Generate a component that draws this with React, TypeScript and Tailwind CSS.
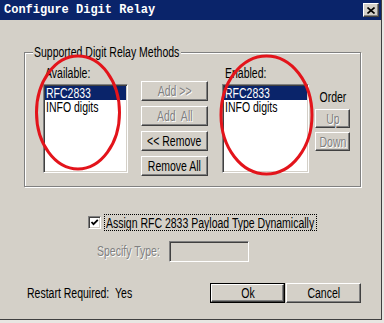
import React from 'react';

const FONT = "font-['Liberation_Sans',Arial,sans-serif]";

const raised =
  'border border-t-white border-l-white border-r-[#404040] border-b-[#404040] shadow-[inset_-1px_-1px_0_#808080] bg-[#d4d0c8]';
const sunken =
  'border border-t-[#808080] border-l-[#808080] border-r-white border-b-white shadow-[inset_1px_1px_0_#404040,inset_-1px_-1px_0_#d4d0c8]';
const disabledText = 'text-[#808080] [text-shadow:1px_1px_0_#fff]';

// the dialog font is a tall narrow sans; squeeze Liberation Sans to match
function T({ children, center }: { children: React.ReactNode; center?: boolean }) {
  return (
    <span
      className={`inline-block whitespace-pre scale-x-[0.75] ${center ? 'origin-center' : 'origin-left'}`}
    >
      {children}
    </span>
  );
}

function Button({
  label,
  disabled,
  className = '',
}: {
  label: string;
  disabled?: boolean;
  className?: string;
}) {
  return (
    <div
      className={`${raised} flex items-center justify-center leading-none overflow-visible ${
        disabled ? disabledText : 'text-black'
      } ${className}`}
    >
      <T center>{label}</T>
    </div>
  );
}

function ListBox({ items, className = '' }: { items: string[]; className?: string }) {
  return (
    <div className={`${sunken} bg-white p-[1px] ${className}`}>
      {items.map((it, i) => (
        <div
          key={it}
          className={`h-[14px] leading-[14px] pl-[1px] ${
            i === 0 ? 'bg-[#0a246a] text-white' : 'text-black'
          }`}
        >
          <T>{it}</T>
        </div>
      ))}
    </div>
  );
}

export default function App() {
  return (
    <div className={`w-[384px] h-[323px] bg-[#e8e6e2] relative overflow-hidden ${FONT} text-[14px]`}>
      <div className="w-[382px] h-[320px] bg-[#d4d0c8] border-r border-b border-r-[#404040] border-b-[#404040] flex flex-col">
        {/* Title bar */}
        <div className="h-[20px] bg-[#0a246a] flex items-center justify-between pl-[4px] pr-[2px] shrink-0">
          <span className="font-['Liberation_Mono',monospace] font-bold text-[12px] text-white leading-none">
            Configure Digit Relay
          </span>
          <div className={`${raised} w-[16px] h-[14px] flex items-center justify-center`}>
            <svg width="8" height="7" viewBox="0 0 8 7">
              <path d="M0.5 0.5 L7.5 6.5 M7.5 0.5 L0.5 6.5" stroke="#000" strokeWidth="1.6" />
            </svg>
          </div>
        </div>

        {/* Group box */}
        <div className="relative mt-[32px] ml-[24px] w-[337px] h-[135px] shrink-0 border border-[#808080] shadow-[inset_1px_1px_0_#fff,1px_1px_0_#fff] flex items-start">
          <span className="absolute left-[8px] -top-[8px] w-[148px] pl-[1px] bg-[#d4d0c8] leading-[14px] text-black">
            <T>Supported Digit Relay Methods</T>
          </span>

          <div className="ml-[18px] mt-[13px] flex flex-col">
            <div className="h-[14px] leading-[14px] pl-[2px] text-black">
              <T>Available:</T>
            </div>
            <ListBox items={['RFC2833', 'INFO digits']} className="mt-[4px] w-[85px] h-[89px]" />
          </div>

          <div className="ml-[13px] mt-[28px] flex flex-col gap-[5px]">
            <Button label="Add >>" disabled className="w-[67px] h-[20px]" />
            <Button label="Add  All" disabled className="w-[67px] h-[20px]" />
            <Button label="<< Remove" className="w-[67px] h-[20px]" />
            <Button label="Remove All" className="w-[67px] h-[20px]" />
          </div>

          <div className="ml-[14px] mt-[13px] flex flex-col">
            <div className="h-[14px] leading-[14px] pl-[3px] text-black">
              <T>Enabled:</T>
            </div>
            <ListBox items={['RFC2833', 'INFO digits']} className="mt-[4px] w-[87px] h-[89px]" />
          </div>

          <div className="ml-[6px] mt-[37px] flex flex-col items-center">
            <div className="h-[14px] leading-[14px] text-black">
              <T center>Order</T>
            </div>
            <Button label="Up" disabled className="mt-[5px] w-[35px] h-[19px]" />
            <Button label="Down" disabled className="mt-[4px] w-[35px] h-[19px]" />
          </div>
        </div>

        {/* Checkbox row */}
        <div className="mt-[27px] h-[17px] shrink-0 flex items-center">
          <div className={`${sunken} ml-[88px] w-[13px] h-[13px] bg-white flex items-center justify-center`}>
            <svg width="9" height="9" viewBox="0 0 9 9">
              <path d="M1.5 4 L3.5 6.2 L7.8 1.8" stroke="#000" strokeWidth="1.8" fill="none" />
            </svg>
          </div>
          <div className="ml-[3px] w-[213px] h-[17px] pl-[1px] border border-dotted border-black flex items-center leading-none text-black overflow-hidden">
            <T>Assign RFC 2833 Payload Type Dynamically</T>
          </div>
        </div>

        {/* Specify type */}
        <div className="mt-[10px] h-[21px] shrink-0 flex items-center">
          <span className={`ml-[97px] w-[72px] ${disabledText}`}>
            <T>Specify Type:</T>
          </span>
          <div className={`${sunken} w-[80px] h-[21px] bg-[#d4d0c8]`} />
        </div>

        {/* Bottom row */}
        <div className="mt-[21px] h-[20px] shrink-0 flex items-center">
          <div className="ml-[27px] w-[183px] flex text-black">
            <span className="w-[88px]">
              <T>Restart Required:</T>
            </span>
            <span>
              <T>Yes</T>
            </span>
          </div>
          <div className="w-[75px] h-[20px] border border-black">
            <Button label="Ok" className="w-full h-full" />
          </div>
          <Button label="Cancel" className="ml-[1px] w-[75px] h-[20px]" />
        </div>
      </div>

      {/* red annotation marks */}
      <svg className="absolute inset-0 pointer-events-none" width="384" height="323">
        <ellipse cx="78" cy="112.5" rx="41.5" ry="56.5" fill="none" stroke="#e3141b" strokeWidth="3" />
        <ellipse cx="266.5" cy="115" rx="45.5" ry="59" fill="none" stroke="#e3141b" strokeWidth="3" />
      </svg>
    </div>
  );
}
